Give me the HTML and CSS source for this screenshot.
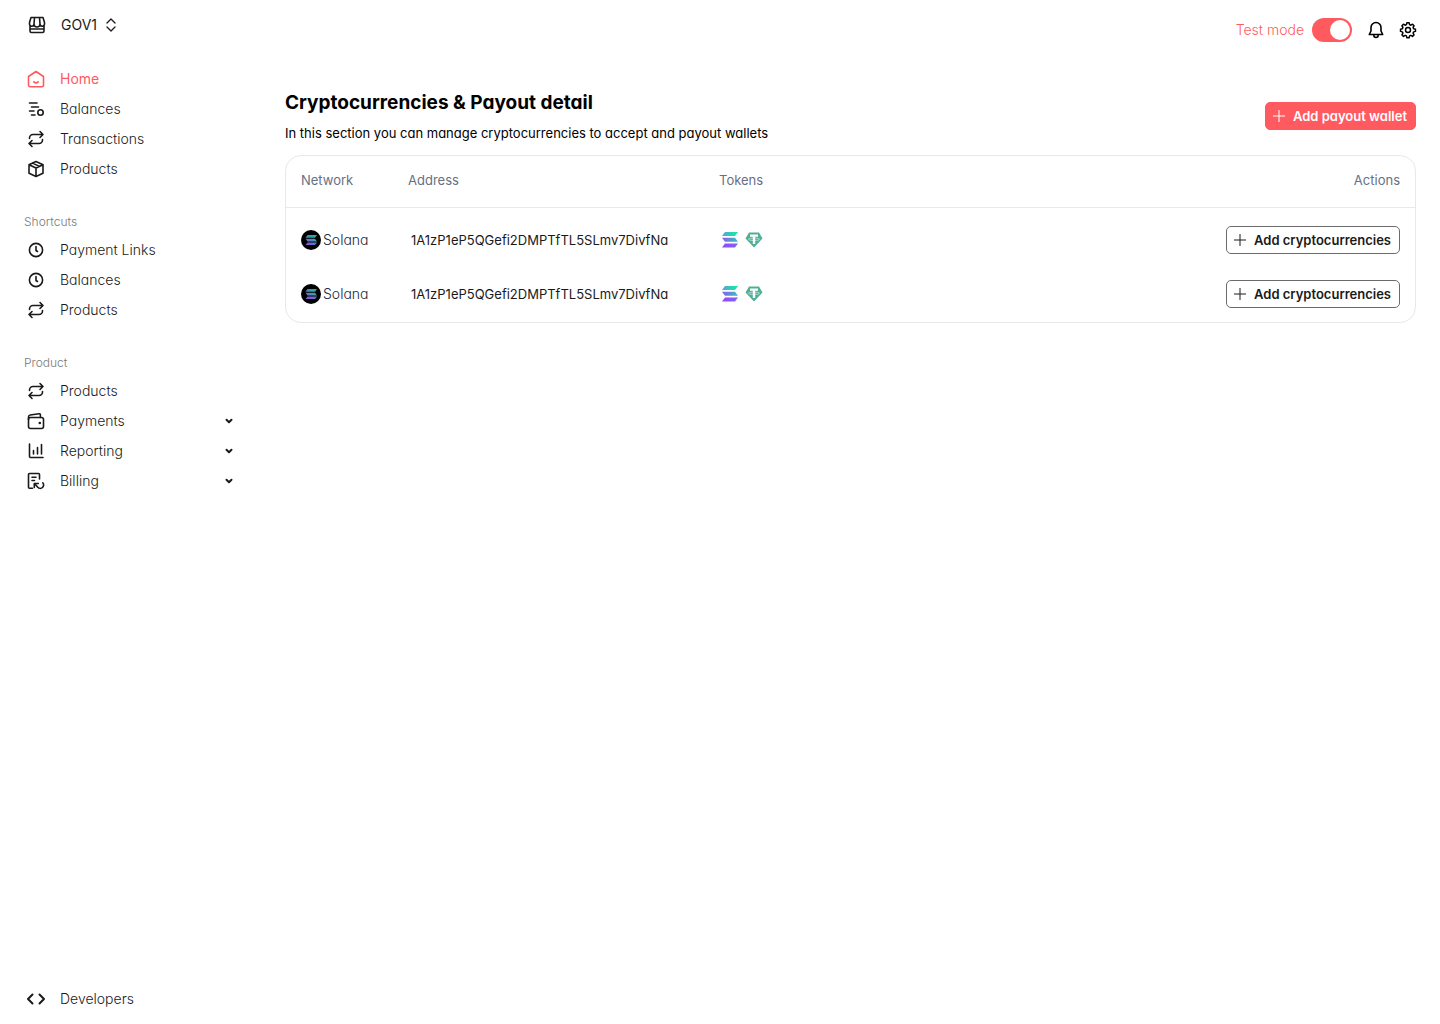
FILE: index.html
```html
<!DOCTYPE html>
<html lang="en">
<head>
<meta charset="utf-8">
<meta name="viewport" content="width=device-width, initial-scale=1">
<title>Cryptocurrencies &amp; Payout detail</title>
<link rel="stylesheet" href="styles.css">
</head>
<body>
<svg class="defs" aria-hidden="true">
  <defs>
    <linearGradient id="sol-top" x1="0" y1="0" x2="1" y2="0"><stop offset="0" stop-color="#5aa0e0"/><stop offset="1" stop-color="#0cf29b"/></linearGradient>
    <linearGradient id="sol-mid" x1="0" y1="0" x2="1" y2="0"><stop offset="0" stop-color="#8a5cf2"/><stop offset="1" stop-color="#38bfc0"/></linearGradient>
    <linearGradient id="sol-low" x1="0" y1="0" x2="1" y2="0"><stop offset="0" stop-color="#9945ff"/><stop offset="1" stop-color="#7a66f0"/></linearGradient>
    <linearGradient id="coin-top" x1="0" y1="0" x2="1" y2="0"><stop offset="0" stop-color="#4a86b8"/><stop offset="1" stop-color="#22b59a"/></linearGradient>
    <linearGradient id="coin-mid" x1="0" y1="0" x2="1" y2="0"><stop offset="0" stop-color="#6a6fc8"/><stop offset="1" stop-color="#35a2a8"/></linearGradient>
    <linearGradient id="coin-low" x1="0" y1="0" x2="1" y2="0"><stop offset="0" stop-color="#8a4be0"/><stop offset="1" stop-color="#5a7cc8"/></linearGradient>
    <symbol id="swap" viewBox="0 0 24 24"><path d="M16 4.500l3 3-3 3M19 7.500H9A3.500 3.500 0 0 0 5.500 11v.5M8 13.500l-3 3 3 3M5 16.500h10a3.500 3.500 0 0 0 3.500-3.500v-.5"/></symbol>
    <symbol id="clock" viewBox="0 0 24 24"><circle cx="12" cy="12" r="6.600"/><path d="M12 8.500v4l1.500 1"/></symbol>
    <symbol id="chevron" viewBox="0 0 24 24"><path d="M9.500 10.700l2.500 2.500 2.500-2.500"/></symbol>
    <symbol id="plus" viewBox="0 0 12 12"><path d="M6 0v12M0 6h12"/></symbol>
    <symbol id="solana-coin" viewBox="0 0 20 20">
      <circle cx="10" cy="10" r="10" fill="#000"/>
      <path fill="url(#coin-top)" d="M6.500 5H16l-2 2.700H4.500z"/>
      <path fill="url(#coin-mid)" d="M4.500 8.700H14l2 2.700H6.500z"/>
      <path fill="url(#coin-low)" d="M6.500 12.400H16l-2 2.700H4.500z"/>
    </symbol>
    <symbol id="solana" viewBox="0 0 18 16">
      <path fill="url(#sol-top)" d="M4 0h13l-3 4H1z"/>
      <path fill="url(#sol-mid)" d="M1 5.800h13l3 4H4z"/>
      <path fill="url(#sol-low)" d="M4 11.600h13l-3 4H1z"/>
    </symbol>
    <symbol id="tether" viewBox="0 0 18 16">
      <path fill="#50af95" d="M4 .5h10l3.500 6L9 15.500.5 6.500z"/>
      <path fill="#fff" d="M5 2.500h8v2.200h-2.800V12H7.800V4.700H5z"/>
      <ellipse cx="9" cy="7.300" rx="5.500" ry="1.200" fill="none" stroke="#fff" stroke-width=".5"/>
    </symbol>
  </defs>
</svg>
<div class="app">
  <aside class="sidebar">
    <button class="account" type="button">
      <svg class="icon" viewBox="0 0 24 24"><path d="M6 4.500h12l1.500 5v1.500a2.200 2.200 0 0 1-4.500 0 3 3 0 0 1-6 0 2.200 2.200 0 0 1-4.500 0V9.500zM9.500 4.500L9 11M14.500 4.500L15 11M5 13v5a1.500 1.500 0 0 0 1.500 1.500h11A1.500 1.500 0 0 0 19 18v-5M5 16h14"/></svg>
      <span>GOV1</span>
      <svg class="sorter" viewBox="0 0 12 14"><path d="M2 5l4-4 4 4M2 9l4 4 4-4"/></svg>
    </button>
    <nav class="nav">
      <a class="nav-item active" href="#"><svg class="icon" viewBox="0 0 24 24"><path d="M4.500 9.500L12 4.500l7.500 5V18a1.700 1.700 0 0 1-1.700 1.700H6.200A1.700 1.700 0 0 1 4.500 18zM9.800 14.800c1.300 1.200 3.100 1.200 4.400 0"/></svg><span>Home</span></a>
      <a class="nav-item" href="#"><svg class="icon" viewBox="0 0 24 24"><path d="M5.500 6h7.500M7.500 10h7M5.500 14h4.500M7.500 18h3.500"/><circle cx="16.500" cy="15.500" r="2.700"/></svg><span>Balances</span></a>
      <a class="nav-item" href="#"><svg class="icon"><use href="#swap"/></svg><span>Transactions</span></a>
      <a class="nav-item" href="#"><svg class="icon" viewBox="0 0 24 24"><path d="M12 4.500l7 3.200v8.600l-7 3.200-7-3.200V7.700zM5 7.700l7 3.300 7-3.300M12 11v8.500M8.500 6.100l7 3.300"/></svg><span>Products</span></a>
      <h2 class="nav-label">Shortcuts</h2>
      <a class="nav-item" href="#"><svg class="icon"><use href="#clock"/></svg><span>Payment Links</span></a>
      <a class="nav-item" href="#"><svg class="icon"><use href="#clock"/></svg><span>Balances</span></a>
      <a class="nav-item" href="#"><svg class="icon"><use href="#swap"/></svg><span>Products</span></a>
      <h2 class="nav-label">Product</h2>
      <a class="nav-item" href="#"><svg class="icon"><use href="#swap"/></svg><span>Products</span></a>
      <a class="nav-item" href="#"><svg class="icon" viewBox="0 0 24 24"><rect x="4.500" y="8.500" width="15" height="11" rx="2"/><path d="M4.500 10.500V8a2 2 0 0 1 1.700-2L15 4.700a1.200 1.200 0 0 1 1.400 1.200v2.600"/><circle class="dot" cx="15.800" cy="14" r="1.300"/></svg><span>Payments</span><svg class="icon bold caret"><use href="#chevron"/></svg></a>
      <a class="nav-item" href="#"><svg class="icon" viewBox="0 0 24 24"><path d="M5.500 5v12.500a1 1 0 0 0 1 1H19M9.500 11.500V15M13.500 8.500V15M17.500 5.500V15"/></svg><span>Reporting</span><svg class="icon bold caret"><use href="#chevron"/></svg></a>
      <a class="nav-item" href="#"><svg class="icon" viewBox="0 0 24 24"><path d="M8.500 19.200H5.500a1 1 0 0 1-1-1V5.500a1 1 0 0 1 1-1h9a1 1 0 0 1 1 1V10M8 8.200h4M8 11.500h2.500M10.300 18.500v-4h4M10.600 14.800l3.200 3.400a3.200 3.200 0 0 0 5-4.400"/></svg><span>Billing</span><svg class="icon bold caret"><use href="#chevron"/></svg></a>
    </nav>
    <a class="nav-item developers" href="#"><svg class="icon bold" viewBox="0 0 24 24"><path d="M8.500 7.500L4 12l4.500 4.500M15.500 7.500L20 12l-4.500 4.500"/></svg><span>Developers</span></a>
  </aside>
  <main class="main">
    <header class="topbar">
      <label class="test-mode"><span>Test mode</span><input class="switch" type="checkbox" role="switch" checked></label>
      <button class="icon-button" type="button" aria-label="Notifications"><svg class="icon" viewBox="0 0 24 24"><path d="M12 4.500a5 5 0 0 0-5 5v3.500L5.300 16.500h13.400L17 13V9.500a5 5 0 0 0-5-5zM9.800 16.800v.5a2.200 2.200 0 0 0 4.400 0v-.5"/></svg></button>
      <button class="icon-button" type="button" aria-label="Settings"><svg class="icon" viewBox="-1 -.5 26 26"><path d="M10.800 4.700h2.400l.5 2 1.400.6 1.800-1.100 1.700 1.700-1.100 1.800.6 1.400 2 .5v2.400l-2 .5-.6 1.400 1.100 1.800-1.700 1.700-1.800-1.100-1.400.6-.5 2h-2.400l-.5-2-1.400-.6-1.800 1.100-1.700-1.700 1.100-1.800-.6-1.400-2-.5v-2.400l2-.5.6-1.400-1.100-1.800 1.700-1.700 1.800 1.100 1.400-.6z"/><circle cx="12" cy="12.600" r="2.700"/></svg></button>
    </header>
    <section>
      <div class="heading">
        <div>
          <h1>Cryptocurrencies &amp; Payout detail</h1>
          <p>In this section you can manage cryptocurrencies to accept and payout wallets</p>
        </div>
        <button class="button primary" type="button"><svg class="plus"><use href="#plus"/></svg><span>Add payout wallet</span></button>
      </div>
      <div class="card">
        <table class="wallets">
          <thead><tr><th class="network">Network</th><th class="address">Address</th><th>Tokens</th><th class="actions">Actions</th></tr></thead>
          <tbody>
            <tr>
              <td class="network"><div class="coin"><svg class="coin-logo"><use href="#solana-coin"/></svg><span>Solana</span></div></td>
              <td class="address">1A1zP1eP5QGefi2DMPTfTL5SLmv7DivfNa</td>
              <td><div class="tokens"><svg class="token"><use href="#solana"/></svg><svg class="token"><use href="#tether"/></svg></div></td>
              <td class="actions"><button class="button" type="button"><svg class="plus"><use href="#plus"/></svg><span>Add cryptocurrencies</span></button></td>
            </tr>
            <tr>
              <td class="network"><div class="coin"><svg class="coin-logo"><use href="#solana-coin"/></svg><span>Solana</span></div></td>
              <td class="address">1A1zP1eP5QGefi2DMPTfTL5SLmv7DivfNa</td>
              <td><div class="tokens"><svg class="token"><use href="#solana"/></svg><svg class="token"><use href="#tether"/></svg></div></td>
              <td class="actions"><button class="button" type="button"><svg class="plus"><use href="#plus"/></svg><span>Add cryptocurrencies</span></button></td>
            </tr>
          </tbody>
        </table>
      </div>
    </section>
  </main>
</div>
</body>
</html>
```
FILE: styles.css
```css
* { box-sizing: border-box; }

body {
  margin: 0;
  background: #fff;
  color: #1a1a1a;
  font-family: Inter, "Liberation Sans", sans-serif;
  font-feature-settings: "cv11";
  font-size: 14px;
  font-weight: 300;
  line-height: 20px;
}

h1, h2, p { margin: 0; }

button {
  font: inherit;
  font-feature-settings: inherit;
  color: inherit;
  background: none;
  border: 0;
  padding: 0;
  cursor: pointer;
}

svg { display: block; flex: none; }
.defs { position: absolute; width: 0; height: 0; }

.icon {
  width: 24px;
  height: 24px;
  fill: none;
  stroke: currentColor;
  stroke-width: 1.6;
  stroke-linecap: round;
  stroke-linejoin: round;
}
.icon.bold { stroke-width: 2; }
.icon .dot { fill: currentColor; stroke: none; }

.app {
  display: grid;
  grid-template-columns: 265px 1fr;
  min-height: 100vh;
}

.sidebar {
  display: flex;
  flex-direction: column;
  padding: 10px 24px;
}

.account {
  display: flex;
  align-items: center;
  gap: 12px;
  height: 30px;
  margin-bottom: 24px;
  padding-left: 1px;
  font-weight: 400;
}
.sorter {
  width: 12px;
  height: 14px;
  margin-left: -4px;
  fill: none;
  stroke: currentColor;
  stroke-width: 1.3;
  stroke-linecap: round;
  stroke-linejoin: round;
}

.nav-item {
  display: flex;
  align-items: center;
  gap: 12px;
  height: 30px;
  color: inherit;
  text-decoration: none;
}
.nav-item.active { color: #ff5a5f; font-weight: 400; }
.nav-item .caret { margin-left: auto; }
.developers { margin-top: auto; }

.nav-label {
  margin: 28px 0 3px;
  color: #7a7a7a;
  font-size: 12px;
  font-weight: 300;
  line-height: 20px;
}

.main { padding: 18px 24px 24px 20px; }

.topbar {
  display: flex;
  justify-content: flex-end;
  align-items: center;
  gap: 16px;
  height: 24px;
  margin-bottom: 48px;
}
.test-mode {
  display: flex;
  align-items: center;
  gap: 8px;
  color: #ff5a5f;
}
.switch {
  appearance: none;
  display: flex;
  width: 40px;
  height: 24px;
  margin: 0;
  padding: 2px;
  border-radius: 12px;
  background: #c4c4c4;
}
.switch::before {
  content: "";
  width: 20px;
  height: 20px;
  border-radius: 50%;
  background: #fff;
}
.switch:checked {
  justify-content: flex-end;
  background: #ff5a5f;
}
.icon-button { width: 16px; color: #000; }
.icon-button .icon { margin: 0 -4px; }

.heading {
  display: flex;
  justify-content: space-between;
  align-items: center;
  margin-bottom: 13px;
  color: #000;
}
h1 {
  margin-bottom: 8px;
  font-size: 19px;
  font-weight: 700;
  line-height: 26px;
}
.heading p {
  font-size: 13px;
  font-weight: 400;
  line-height: 18px;
}

.button {
  display: inline-flex;
  align-items: center;
  gap: 8px;
  height: 28px;
  padding: 0 8px 0 7px;
  border: 1px solid #6b6b6b;
  border-radius: 5px;
  font-size: 13px;
  font-weight: 600;
}
.button.primary {
  border-color: #ff5a5f;
  background: #ff5a5f;
  color: #fff;
}
.plus {
  width: 12px;
  height: 12px;
  stroke: currentColor;
}

.card {
  border: 1px solid #e8e8e8;
  border-radius: 16px;
}
.wallets {
  width: 100%;
  border-spacing: 0;
  table-layout: fixed;
  text-align: left;
}
th {
  height: 52px;
  padding: 0 0 3px;
  border-bottom: 1px solid #e8e8e8;
  color: #667085;
  font-size: 13px;
  font-weight: 400;
}
td {
  padding: 13px 0;
  vertical-align: middle;
}
tbody tr:first-child td { padding-top: 18px; }
tbody tr:last-child td { padding-bottom: 14px; }
.network { width: 122px; padding-left: 15px; }
.address { width: 311px; }
td.address { padding-left: 3px; font-size: 13px; font-weight: 400; }
td.network { color: #1d2939; }
.actions { padding-right: 15px; text-align: right; }
td .button { vertical-align: top; }

.coin {
  display: flex;
  align-items: center;
  gap: 2px;
}
.coin-logo { width: 20px; height: 20px; }
.tokens {
  display: flex;
  gap: 6px;
  padding-left: 2px;
}
.token { width: 18px; height: 16px; }
```
